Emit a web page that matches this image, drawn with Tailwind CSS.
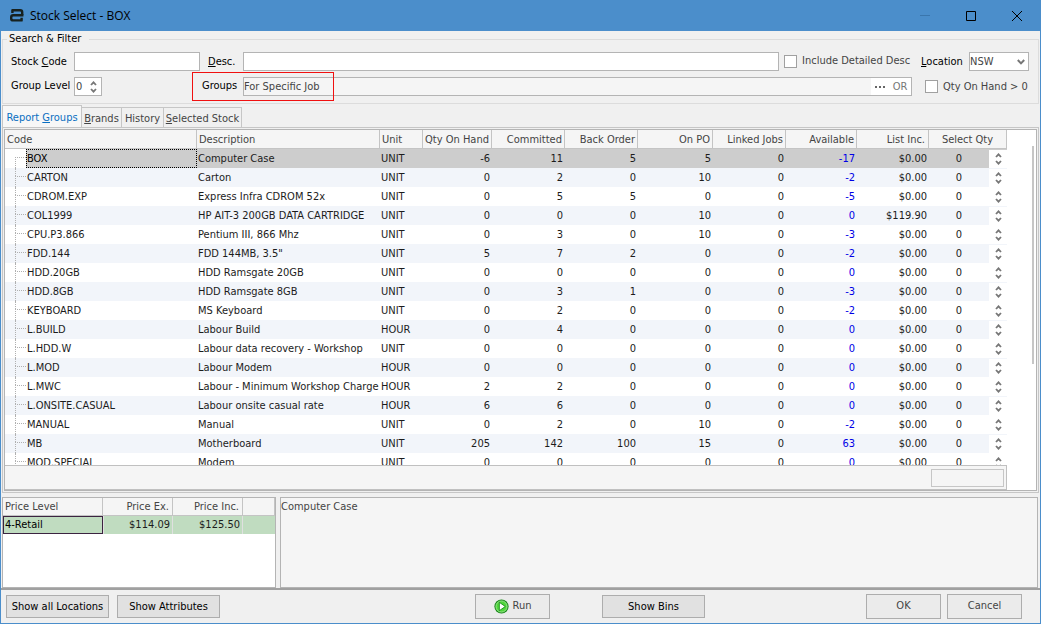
<!DOCTYPE html>
<html lang="en">
<head>
<meta charset="utf-8">
<title>Stock Select - BOX</title>
<script src="https://cdn.jsdelivr.net/npm/@tailwindcss/browser@4"></script>
</head>
<body class="h-screen overflow-hidden bg-[#f0f0f0] font-['Tahoma','DejaVu_Sans_Condensed',sans-serif] text-[11px] leading-4 text-black">
<div class="flex h-full flex-col border border-[#4b8ecb]">
  <header class="flex h-[30px] shrink-0 items-center bg-[#4b8ecb] pl-2">
    <svg class="size-4" viewBox="0 0 16 16" fill="none" stroke="#17211f" stroke-width="2.4" stroke-linejoin="round"><path d="M3.4 5V2.2H11.2Q13.2 2.2 13.2 4.2V7.2"/><path d="M14.4 7.2H4.2Q2.2 7.2 2.2 9.2V10.4Q2.2 12.4 4.2 12.4H12.6V9.8"/></svg>
    <h1 class="ml-[5px] font-['Open_Sans',sans-serif] text-xs">Stock Select - BOX</h1>
    <div class="ml-auto flex">
      <button aria-label="Minimize" class="grid h-[30px] w-[46px] place-items-center"><svg class="size-[10px]" viewBox="0 0 10 10" stroke="#3a76ad"><path d="M0 4.5H10"/></svg></button>
      <button aria-label="Maximize" class="grid h-[30px] w-[46px] place-items-center"><svg class="size-[10px]" viewBox="0 0 10 10" fill="none" stroke="#000"><path d="M.5 .5H9.5V9.5H.5Z"/></svg></button>
      <button aria-label="Close" class="grid h-[30px] w-[46px] place-items-center"><svg class="size-[10px]" viewBox="0 0 10 10" stroke="#000"><path d="M0 0L10 10M10 0L0 10"/></svg></button>
    </div>
  </header>

  <fieldset class="mx-px shrink-0 border border-[#dcdcdc] pr-[9px] pb-[7px] pl-2 text-[#444]">
    <legend class="-ml-1 pr-2 pl-0.5 text-black">Search &amp; Filter</legend>
    <div class="mt-[5px] flex h-[19px] items-center">
      <label for="code" class="w-[63px] text-black">Stock <u>C</u>ode</label>
      <input id="code" class="h-[19px] w-[126px] border border-[#b4b4b4] bg-white">
      <label for="desc" class="ml-2 w-[35px] text-black"><u>D</u>esc.</label>
      <input id="desc" class="h-[19px] min-w-0 flex-1 border border-[#b4b4b4] bg-white">
      <input id="detail" type="checkbox" class="ml-[5px] size-[13px] appearance-none border border-[#a0a0a0] bg-white">
      <label for="detail" class="ml-[5px] w-[119px] pb-0.5">Include Detailed Desc</label>
      <label for="loc" class="w-12 text-black"><u>L</u>ocation</label>
      <div class="relative">
        <select id="loc" class="block h-[19px] w-[60px] appearance-none border border-[#b4b4b4] bg-white"><option>NSW</option></select>
        <svg class="pointer-events-none absolute top-[7px] right-1 h-[6px] w-[8px]" viewBox="0 0 8 6" fill="none" stroke="#777" stroke-width="2"><path d="M.8 1L4 4.4L7.2 1"/></svg>
      </div>
    </div>
    <div class="relative mt-[6px] flex h-[19px] items-center">
      <label for="level" class="w-[63px] pb-0.5 whitespace-nowrap text-black">Group Level</label>
      <div class="flex h-[19px] w-[28px] items-center border border-[#b4b4b4] bg-white">
        <input id="level" value="0" class="w-[15px] pl-px">
        <svg class="h-3 w-[7px]" viewBox="0 0 7 12" fill="none" stroke="#777" stroke-width="1.8"><path d="M1 4L3.5 1.3L6 4M1 8L3.5 10.7L6 8"/></svg>
      </div>
      <label for="groups" class="ml-[100px] w-[41px] pb-0.5 text-black">Groups</label>
      <div class="flex h-[19px] min-w-0 flex-1 items-center border border-[#b4b4b4] bg-[#f5f5f5]">
        <input id="groups" value="For Specific Job" class="min-w-0 flex-1">
        <button aria-label="Browse groups" class="grid h-[17px] w-[18px] place-items-center bg-white"><svg class="h-[2px] w-[10px]" viewBox="0 0 10 2" fill="#666"><path d="M0 0h2v2H0zM4 0h2v2H4zM8 0h2v2H8z"/></svg></button>
        <button class="h-[17px] w-[22px] bg-white text-[#777]">OR</button>
      </div>
      <input id="onhand" type="checkbox" class="ml-[13px] size-[13px] appearance-none border border-[#a0a0a0] bg-white">
      <label for="onhand" class="ml-[5px] w-[86px] whitespace-nowrap">Qty On Hand &gt; 0</label>
      <div class="pointer-events-none absolute -top-[5px] left-[181px] h-[29px] w-[142px] border border-[#f01010]"></div>
    </div>
  </fieldset>

  <nav class="mx-px mt-px flex h-[22px] shrink-0 items-end text-[#444]">
    <button class="h-[22px] w-20 border border-b-0 border-[#c6c6c6] bg-[#f7f7f7] pt-0.5 text-[#0a6fc2]">Report <u>G</u>roups</button>
    <button class="h-5 w-10 border-t border-r border-[#c6c6c6] pt-0.5"><u>B</u>rands</button>
    <button class="h-5 w-[42px] border-t border-r border-[#c6c6c6] pt-0.5">History</button>
    <button class="h-5 w-[78px] border-t border-r border-[#c6c6c6] pt-0.5"><u>S</u>elected Stock</button>
  </nav>

  <main class="mx-px flex min-h-0 flex-1 flex-col border border-[#c6c6c6] p-px">
    <div class="flex min-h-0 flex-1 border border-[#b4b4b4] bg-white">
      <div class="flex min-w-0 flex-1 flex-col">
        <div class="min-h-0 flex-1 overflow-hidden">
          <table class="w-full table-fixed border-separate border-spacing-0 text-[#1c1c1c]">
            <thead>
              <tr class="h-[19px] bg-[#f5f5f5] text-[#444] [&>th]:border-r [&>th]:border-b [&>th]:border-[#c4c4c4] [&>th]:p-0 [&>th]:pt-0.5 [&>th]:font-normal [&>th]:whitespace-nowrap">
                <th class="w-[192px] text-left"><span class="pl-0.5">Code</span></th>
                <th class="text-left"><span class="pl-0.5">Description</span></th>
                <th class="w-[43px] text-left"><span class="pl-0.5">Unit</span></th>
                <th class="w-[69px] text-right"><span class="pr-0.5">Qty On Hand</span></th>
                <th class="w-[73px] text-right"><span class="pr-0.5">Committed</span></th>
                <th class="w-[73px] text-right"><span class="pr-0.5">Back Order</span></th>
                <th class="w-[75px] text-right"><span class="pr-0.5">On PO</span></th>
                <th class="w-[73px] text-right"><span class="pr-0.5">Linked Jobs</span></th>
                <th class="w-[71px] text-right"><span class="pr-0.5">Available</span></th>
                <th class="w-[72px] text-right"><span class="pr-[3px]">List Inc.</span></th>
                <th class="w-[78px] text-center">Select Qty</th>
              </tr>
            </thead>
            <tbody id="rows"></tbody>
          </table>
        </div>
        <div class="flex h-[25px] shrink-0 justify-end border border-l-0 border-[#c0c0c0] bg-[#f5f5f5] pt-[3px] pr-0.5">
          <div class="h-[18px] w-[73px] border border-[#c6c6c6]"></div>
        </div>
      </div>
      <div class="flex w-[29px] shrink-0 justify-end pt-4 pr-[2px]"><div class="h-[218px] w-[2px] bg-[#c6c6c6]"></div></div>
    </div>
  </main>

  <section class="mx-px mt-1 flex h-[91px] shrink-0 gap-1 pr-px text-[#444]">
    <div class="w-[274px] border border-[#b4b4b4] bg-white">
      <table class="w-full table-fixed border-separate border-spacing-0">
        <thead>
          <tr class="h-[18px] bg-[#f5f5f5] [&>th]:border-r [&>th]:border-b [&>th]:border-[#c4c4c4] [&>th]:p-0 [&>th]:pt-px [&>th]:font-normal">
            <th class="w-[100px] text-left"><span class="pl-0.5">Price Level</span></th>
            <th class="w-[70px] text-right"><span class="pr-[3px]">Price Ex.</span></th>
            <th class="w-[70px] text-right"><span class="pr-[3px]">Price Inc.</span></th>
            <th aria-label="Blank"></th>
          </tr>
        </thead>
        <tbody>
          <tr class="h-[18px] bg-[#c0dcc0] text-[#1c1c1c] [&>td]:p-0">
            <td><div class="h-[18px] border border-[#3b2340] pl-px text-black">4-Retail</div></td>
            <td class="border-x border-[#e0e0e0] text-right"><span class="pr-0.5">$114.09</span></td>
            <td class="border-r border-[#e0e0e0] text-right"><span class="pr-0.5">$125.50</span></td>
            <td></td>
          </tr>
        </tbody>
      </table>
    </div>
    <textarea aria-label="Detailed description" readonly class="min-w-0 flex-1 resize-none border border-[#b4b4b4] bg-[#f5f5f5] pt-px">Computer Case</textarea>
  </section>

  <footer class="flex h-[35px] shrink-0 items-center border-t-2 border-[#a0a0a0] pr-[18px] pb-px pl-[5px] text-black">
    <button class="h-[23px] w-[103px] border border-[#adadad] bg-[#e1e1e1] pt-px">Show all Locations</button>
    <button class="ml-2 h-[23px] w-[103px] border border-[#adadad] bg-[#e1e1e1] pt-px">Show Attributes</button>
    <button class="ml-[255px] flex h-[25px] w-[75px] items-center justify-center gap-1 border border-[#adadad] bg-[#ebebeb] text-[#444]">
      <svg class="size-[15px]" viewBox="0 0 15 15"><circle cx="7.5" cy="7.5" r="7.1" fill="#168a16"/><circle cx="7.5" cy="7.5" r="5.6" fill="#4fd83a" stroke="#b5efaa" stroke-width=".8"/><path d="M5.3 3.3L11.3 7.5L5.3 11.7Z" fill="#fff" stroke="#168a16" stroke-width=".9"/></svg>
      Run</button>
    <button class="ml-[52px] h-[23px] w-[103px] border border-[#adadad] bg-[#e1e1e1] pt-px">Show Bins</button>
    <button class="ml-auto h-[25px] w-[75px] border border-[#adadad] bg-[#ebebeb] text-[#444]">OK</button>
    <button class="ml-1.5 h-[25px] w-[75px] border border-[#adadad] bg-[#ebebeb] text-[#444]">Cancel</button>
  </footer>
</div>
<script>
const items = [
  ['BOX','Computer Case','UNIT','-6','11','5','5','0','-17','$0.00'],
  ['CARTON','Carton','UNIT','0','2','0','10','0','-2','$0.00'],
  ['CDROM.EXP','Express Infra CDROM 52x','UNIT','0','5','5','0','0','-5','$0.00'],
  ['COL1999','HP AIT-3 200GB DATA CARTRIDGE','UNIT','0','0','0','10','0','0','$119.90'],
  ['CPU.P3.866','Pentium III, 866 Mhz','UNIT','0','3','0','10','0','-3','$0.00'],
  ['FDD.144','FDD 144MB, 3.5"','UNIT','5','7','2','0','0','-2','$0.00'],
  ['HDD.20GB','HDD Ramsgate 20GB','UNIT','0','0','0','0','0','0','$0.00'],
  ['HDD.8GB','HDD Ramsgate 8GB','UNIT','0','3','1','0','0','-3','$0.00'],
  ['KEYBOARD','MS Keyboard','UNIT','0','2','0','0','0','-2','$0.00'],
  ['L.BUILD','Labour Build','HOUR','0','4','0','0','0','0','$0.00'],
  ['L.HDD.W','Labour data recovery - Workshop','UNIT','0','0','0','0','0','0','$0.00'],
  ['L.MOD','Labour Modem','HOUR','0','0','0','0','0','0','$0.00'],
  ['L.MWC','Labour - Minimum Workshop Charge','HOUR','2','2','0','0','0','0','$0.00'],
  ['L.ONSITE.CASUAL','Labour onsite casual rate','HOUR','6','6','0','0','0','0','$0.00'],
  ['MANUAL','Manual','UNIT','0','2','0','10','0','-2','$0.00'],
  ['MB','Motherboard','UNIT','205','142','100','15','0','63','$0.00'],
  ['MOD.SPECIAL','Modem','UNIT','0','0','0','0','0','0','$0.00'],
];
document.getElementById('rows').innerHTML = items.map((r, i) => {
  const bg = i === 0 ? 'bg-[#cdcdcd]' : i % 2 ? 'bg-[#f2f5fa]' : 'bg-white';
  const tree = i === 0
    ? '<span class="flex w-[21px] flex-col bg-white pl-[10px]"><span class="mt-2 h-[11px] border-t border-l border-dotted border-[#b0b0b0]"></span></span>'
    : '<span class="flex w-[21px] flex-col pl-[10px]"><span class="h-2 border-l border-dotted border-[#b0b0b0]"></span><span class="h-[11px] border-t border-l border-dotted border-[#b0b0b0]"></span></span>';
  const name = i === 0
    ? `<span class="flex-1 border border-dotted border-black pt-px text-black">${r[0]}</span>`
    : `<span class="pt-0.5 pl-px">${r[0]}</span>`;
  return `<tr class="h-[19px] ${bg} [&>td]:p-0 [&>td]:whitespace-nowrap">
    <td><div class="flex h-[19px]">${tree}${name}</div></td>
    <td><div class="pt-px pl-px">${r[1]}</div></td><td><div class="pt-px pl-px">${r[2]}</div></td>
    ${r.slice(3).map((v, k) => `<td class="text-right ${k === 5 ? 'text-[#0000e6]' : ''}"><div class="pt-px pr-0.5">${v}</div></td>`).join('')}
    <td><div class="flex h-[19px] items-center"><input aria-label="Select quantity ${r[0]}" value="0" class="w-[60px] pt-px text-center"><span class="flex h-[18px] flex-1 items-center justify-center bg-white"><svg class="h-3 w-[7px]" viewBox="0 0 7 12" fill="none" stroke="#777" stroke-width="1.8"><path d="M1 4L3.5 1.3L6 4M1 8L3.5 10.7L6 8"/></svg></span></div></td>
  </tr>`;
}).join('');
</script>
</body>
</html>
